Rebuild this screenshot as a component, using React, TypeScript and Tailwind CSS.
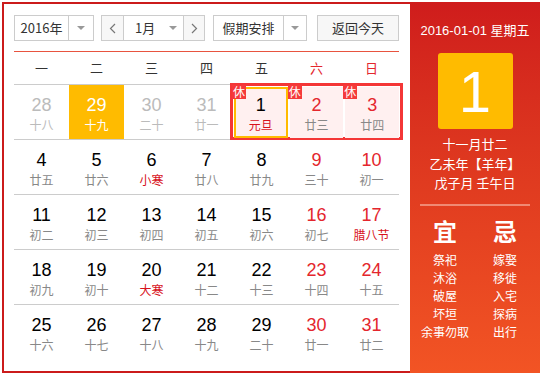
import React from "react";

interface DayCell {
  day: number;
  sub: string;
  muted?: boolean;
  weekend?: boolean;
  festival?: boolean;
}

const weekdays = ["一", "二", "三", "四", "五", "六", "日"];

const rows: DayCell[][] = [
  [
    { day: 28, sub: "十八", muted: true },
    { day: 29, sub: "十九", muted: true },
    { day: 30, sub: "二十", muted: true },
    { day: 31, sub: "廿一", muted: true },
    { day: 1, sub: "元旦", festival: true },
    { day: 2, sub: "廿三", weekend: true },
    { day: 3, sub: "廿四", weekend: true },
  ],
  [
    { day: 4, sub: "廿五" },
    { day: 5, sub: "廿六" },
    { day: 6, sub: "小寒", festival: true },
    { day: 7, sub: "廿八" },
    { day: 8, sub: "廿九" },
    { day: 9, sub: "三十", weekend: true },
    { day: 10, sub: "初一", weekend: true },
  ],
  [
    { day: 11, sub: "初二" },
    { day: 12, sub: "初三" },
    { day: 13, sub: "初四" },
    { day: 14, sub: "初五" },
    { day: 15, sub: "初六" },
    { day: 16, sub: "初七", weekend: true },
    { day: 17, sub: "腊八节", weekend: true, festival: true },
  ],
  [
    { day: 18, sub: "初九" },
    { day: 19, sub: "初十" },
    { day: 20, sub: "大寒", festival: true },
    { day: 21, sub: "十二" },
    { day: 22, sub: "十三" },
    { day: 23, sub: "十四", weekend: true },
    { day: 24, sub: "十五", weekend: true },
  ],
  [
    { day: 25, sub: "十六" },
    { day: 26, sub: "十七" },
    { day: 27, sub: "十八" },
    { day: 28, sub: "十九" },
    { day: 29, sub: "二十" },
    { day: 30, sub: "廿一", weekend: true },
    { day: 31, sub: "廿二", weekend: true },
  ],
];

const goodThings = ["祭祀", "沐浴", "破屋", "坏垣", "余事勿取"];
const badThings = ["嫁娶", "移徙", "入宅", "探病", "出行"];

const num = "font-['Liberation_Sans',Arial,sans-serif]";
const cjk = "font-['Noto_Sans_CJK_SC','Liberation_Sans',sans-serif]";

function Caret() {
  return (
    <span className="block w-0 h-0 border-l-[4px] border-r-[4px] border-t-[4px] border-l-transparent border-r-transparent border-t-[#999]" />
  );
}

function Cell({ cell, today }: { cell: DayCell; today?: boolean }) {
  let dayColor = "text-black";
  if (cell.muted) dayColor = "text-[#bbbbbb]";
  else if (cell.weekend) dayColor = "text-[#e4262d]";
  let subColor = "text-[#888888]";
  if (cell.muted) subColor = "text-[#bbbbbb]";
  if (cell.festival) subColor = "text-[#d7121b]";
  if (today) {
    dayColor = "text-white";
    subColor = "text-white";
  }

  return (
    <div
      className={`h-[54px] flex flex-col items-center pt-[9px] ${
        today ? "bg-[#ffbb00]" : ""
      }`}
    >
      <span className={`${num} text-[18px] leading-[22px] ${dayColor}`}>
        {cell.day}
      </span>
      <span className={`${cjk} text-[12px] leading-[18px] ${subColor}`}>
        {cell.sub}
      </span>
    </div>
  );
}

function HolidayCell({ cell, selected }: { cell: DayCell; selected?: boolean }) {
  const dayColor = cell.weekend ? "text-[#e4262d]" : "text-black";
  const subColor = cell.festival ? "text-[#d7121b]" : "text-[#888888]";
  return (
    <div
      className={`relative h-[51px] bg-[#fff0f0] flex flex-col items-center ${
        selected ? "border-2 border-[#ffbb00] pt-[5px]" : "pt-[7px]"
      }`}
    >
      <span
        className={`absolute ${
          selected ? "-left-[4px] -top-[4px]" : "-left-[2px] -top-[2px]"
        } w-[14px] h-[14px] bg-[#f53a3a] text-white text-[12px] leading-[14px] text-center ${cjk}`}
      >
        休
      </span>
      <span className={`${num} text-[18px] leading-[22px] ${dayColor}`}>
        {cell.day}
      </span>
      <span className={`${cjk} text-[12px] leading-[18px] ${subColor}`}>
        {cell.sub}
      </span>
    </div>
  );
}

export default function App() {
  return (
    <div className="p-[2px] bg-white">
      <div className="w-[538px] h-[371px] flex border-2 border-r-0 border-[#cb1b1b] bg-white">
        {/* LEFT: CALENDAR */}
        <div className="w-[406px] pl-[10px] pr-[11px] pt-[11px]">
          {/* CONTROLS */}
          <div className={`flex items-center h-[26px] text-[13px] text-[#333] ${cjk}`}>
            <div className="flex h-[26px] w-[80px] border border-[#cccccc]">
              <div className="w-[54px] flex items-center justify-center border-r border-[#cccccc]">
                2016年
              </div>
              <div className="flex-1 flex items-center justify-center">
                <Caret />
              </div>
            </div>

            <div className="flex h-[26px] w-[104px] ml-[7px] border border-[#cccccc]">
              <div className="w-[22px] flex items-center justify-center bg-[#f7f7f7] border-r border-[#cccccc] text-[#666]">
                <svg width="7" height="11" viewBox="0 0 7 11">
                  <path d="M6 1 L1.5 5.5 L6 10" fill="none" stroke="#777" strokeWidth="1.2" />
                </svg>
              </div>
              <div className="w-[60px] flex items-center justify-between pl-[11px] pr-[6px] border-r border-[#cccccc]">
                <span>1月</span>
                <Caret />
              </div>
              <div className="flex-1 flex items-center justify-center bg-[#f7f7f7]">
                <svg width="7" height="11" viewBox="0 0 7 11">
                  <path d="M1 1 L5.5 5.5 L1 10" fill="none" stroke="#777" strokeWidth="1.2" />
                </svg>
              </div>
            </div>

            <div className="flex h-[26px] w-[94px] ml-[8px] border border-[#cccccc]">
              <div className="w-[70px] flex items-center justify-center border-r border-[#cccccc]">
                假期安排
              </div>
              <div className="flex-1 flex items-center justify-center">
                <Caret />
              </div>
            </div>

            <div className="h-[26px] w-[82px] ml-[10px] border border-[#cccccc] bg-[#f7f7f7] flex items-center justify-center">
              返回今天
            </div>
          </div>

          {/* WEEKDAY HEADER */}
          <div className={`mt-[10px] border-t border-[#e8533f] border-b border-b-[#cccccc] grid grid-cols-7 h-[34px] items-center ${cjk} text-[13px]`}>
            {weekdays.map((w, i) => (
              <div
                key={w}
                className={`text-center ${i >= 5 ? "text-[#e4262d]" : "text-[#333]"}`}
              >
                {w}
              </div>
            ))}
          </div>

          {/* DAY ROWS */}
          {rows.map((row, ri) => (
            <div
              key={ri}
              className={`grid grid-cols-7 ${ri < 4 ? "border-b border-[#cccccc]" : ""}`}
            >
              {ri === 0 ? (
                <>
                  {row.slice(0, 4).map((c, ci) => (
                    <Cell key={ci} cell={c} today={ci === 1} />
                  ))}
                  <div className="col-span-3 relative h-[54px]">
                    <div className="absolute -left-[4px] -right-[4px] -top-[2px] -bottom-[1px] border-[3px] border-[#f43636] bg-white grid grid-cols-3 gap-[2px] p-[1px]">
                      {row.slice(4).map((c, ci) => (
                        <HolidayCell key={ci} cell={c} selected={ci === 0} />
                      ))}
                    </div>
                  </div>
                </>
              ) : (
                row.map((c, ci) => <Cell key={ci} cell={c} />)
              )}
            </div>
          ))}
        </div>

        {/* RIGHT: DETAIL PANEL */}
        <div className={`w-[130px] -mt-[2px] -mb-[2px] bg-gradient-to-b from-[#cf1c1c] to-[#f25424] flex flex-col items-center text-white ${cjk}`}>
          <div className={`mt-[19px] text-[13px] leading-[18px] ${num}`}>
            2016-01-01 <span className={cjk}>星期五</span>
          </div>
          <div className={`mt-[13px] w-[75px] h-[76px] rounded-[3px] bg-[#ffbb00] flex items-center justify-center text-[58px] ${num}`}>
            1
          </div>
          <div className="mt-[5px] text-[13px] leading-[19.5px] text-center">
            <div>十一月廿二</div>
            <div>乙未年【羊年】</div>
            <div>戊子月 壬午日</div>
          </div>
          <div className="mt-[11px] w-[110px] h-[2px] bg-[#f08a74]" />
          <div className="mt-[10px] w-full grid grid-cols-2 px-[5px]">
            <div className="flex flex-col items-center">
              <div className="text-[24px] leading-[30px] font-bold">宜</div>
              <div className="mt-[5px] text-[12px] leading-[18px] text-center">
                {goodThings.map((g) => (
                  <div key={g}>{g}</div>
                ))}
              </div>
            </div>
            <div className="flex flex-col items-center">
              <div className="text-[24px] leading-[30px] font-bold">忌</div>
              <div className="mt-[5px] text-[12px] leading-[18px] text-center">
                {badThings.map((g) => (
                  <div key={g}>{g}</div>
                ))}
              </div>
            </div>
          </div>
        </div>
      </div>
    </div>
  );
}
